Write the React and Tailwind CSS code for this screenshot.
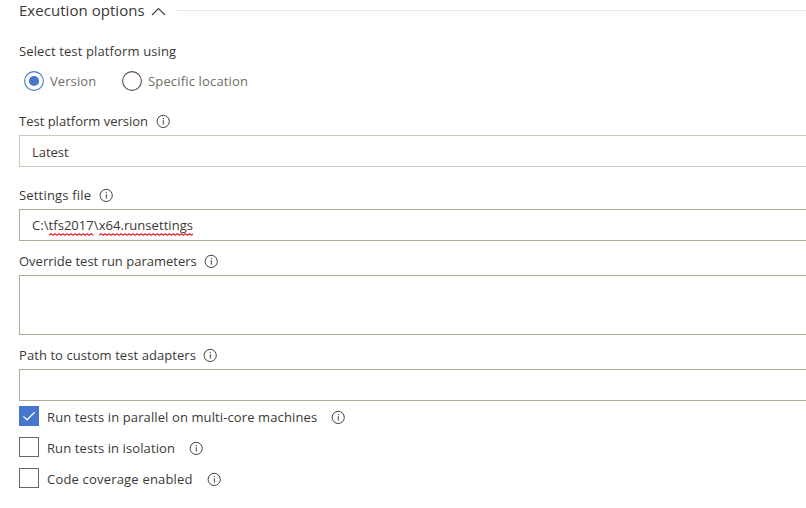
import React from "react";

function Info({ className = "" }) {
  return (
    <svg className={"h-[14px] w-[14px] shrink-0 " + className} viewBox="0 0 14 14" fill="none" stroke="#46403b">
      <circle cx="7.2" cy="7.4" r="6.1" strokeWidth="1" />
      <path d="M7.3 6.2v4.4" strokeWidth="1" />
      <path d="M7.3 4v1.2" strokeWidth="1" />
    </svg>
  );
}

function Label({ children, className, gap = "" }) {
  return (
    <div className={"flex h-5 items-center " + gap}>
      <span className={"shrink-0 " + className}>{children}</span>
      <Info className="ml-2" />
    </div>
  );
}

function Radio({ checked, children, className }) {
  return (
    <div className="flex h-5 items-center gap-[6px] text-[#716d65]">
      <svg className="h-5 w-5 shrink-0" viewBox="0 0 20 20" fill="none">
        <circle cx="10" cy="10" r="9.4" stroke={checked ? "#4676ce" : "#604f45"} strokeWidth="1.1" />
        {checked && <circle cx="10" cy="10" r="5.1" fill="#4676ce" />}
      </svg>
      <span className={className}>{children}</span>
    </div>
  );
}

function Check({ checked, children, className }) {
  return (
    <div className="flex h-5 items-center">
      {checked ? (
        <svg className="h-5 w-5 shrink-0 bg-[#4676ce]" viewBox="0 0 20 20" fill="none" stroke="#fff" strokeWidth="1.2">
          <path d="M4.4 10.4l3.6 3.4 7.6-7.5" />
        </svg>
      ) : (
        <span className="h-5 w-5 shrink-0 border border-[#6b665c] bg-white" />
      )}
      <span className={"ml-2 mt-[2px] shrink-0 " + className}>{children}</span>
      <Info className="ml-[14px] mt-[2px]" />
    </div>
  );
}

function Squiggle({ children, width, path }) {
  return (
    <span className="relative inline-block">
      {children}
      <svg className="absolute bottom-[-1px] left-0 h-[3px] w-full" viewBox={`0 0 ${width} 3`} preserveAspectRatio="none" fill="none" stroke="#e5252d">
        <path d={path} strokeWidth="1.1" />
      </svg>
    </span>
  );
}

function wave(width) {
  let path = "M0 2.3";
  for (let x = 2; x <= width; x += 2) path += `L${x} ${x % 4 ? 0.7 : 2.3}`;
  return path;
}

export default function App() {
  return (
    <main className="h-[508px] w-full overflow-hidden whitespace-nowrap bg-white pl-[19px] font-['Open_Sans',sans-serif] text-[13px] leading-5 text-[#3b3935]">
      <div className="flex h-[22px] items-center">
        <h2 className="-mt-[2px] w-[126px] shrink-0 text-[15px] leading-[22px] tracking-[0.04px]">Execution options</h2>
        <svg className="ml-[6px] h-[9px] w-[15px] shrink-0" viewBox="0 0 15 9" fill="none" stroke="#46403b" strokeWidth="1.1">
          <path d="M1 8l6.5-6.5L14 8" />
        </svg>
        <div className="-mt-px ml-[11px] h-px flex-1 bg-[#eae9d9]" />
      </div>
      <div className="mt-[19px] h-5 tracking-[0.13px]">Select test platform using</div>
      <div className="mt-[10px] flex pl-[5px]">
        <Radio checked className="w-[72px] tracking-[0.08px]">Version</Radio>
        <Radio className="tracking-[0.16px]">Specific location</Radio>
      </div>
      <Label gap="mt-5" className="w-[129px] tracking-[0px]">Test platform version</Label>
      <div className="mt-1 flex h-8 items-center border border-r-0 border-[#ccc8ba] pl-3 pt-[2px] tracking-[-0.05px]">Latest</div>
      <Label gap="mt-[18px]" className="w-[72px] tracking-[0.18px]">Settings file</Label>
      <div className="mt-1 flex h-8 items-center border border-r-0 border-[#b1aa98] pl-3 tracking-[0.05px]">
        <span>C:\</span>
        <Squiggle width={45} path={wave(45)}>tfs2017</Squiggle>
        <span>\</span>
        <Squiggle width={94} path={wave(94)}>x64.runsettings</Squiggle>
      </div>
      <Label gap="mt-[10px]" className="w-[177px] tracking-[0px]">Override test run parameters</Label>
      <div className="mt-1 h-[60px] border border-r-0 border-[#b1aa98]" />
      <Label gap="mt-[10px]" className="w-[176px] tracking-[0.07px]">Path to custom test adapters</Label>
      <div className="mt-1 h-8 border border-r-0 border-[#b1aa98]" />
      <div className="mt-[5px] flex flex-col gap-[11px]">
        <Check checked className="w-[270px] tracking-[0.11px]">Run tests in parallel on multi-core machines</Check>
        <Check className="w-[128px] tracking-[0.1px]">Run tests in isolation</Check>
        <Check className="w-[146px] tracking-[0.19px]">Code coverage enabled</Check>
      </div>
    </main>
  );
}
